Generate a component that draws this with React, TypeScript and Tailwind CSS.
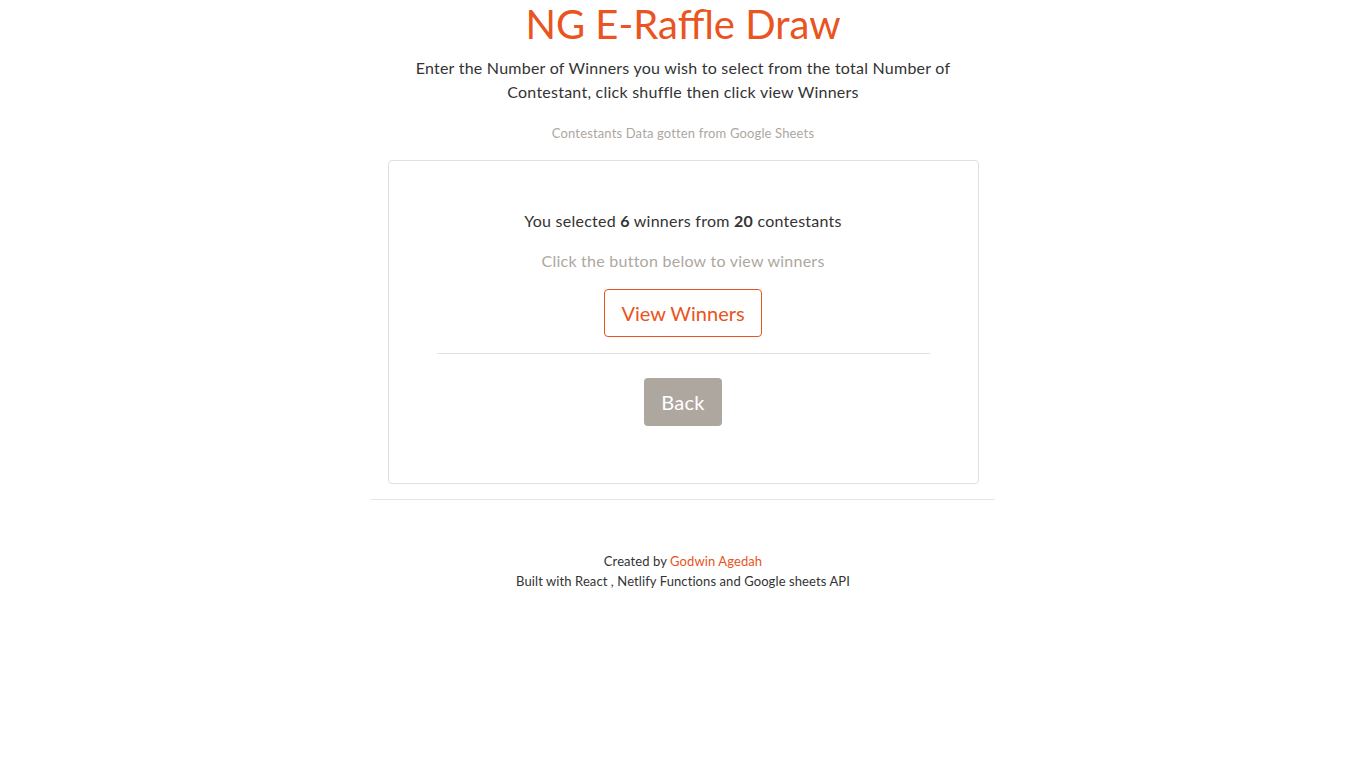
import React from 'react';

const font = { fontFamily: '"Lato", "Noto Sans", sans-serif' };

export default function App() {
  return (
    <div className="min-h-screen w-full bg-white text-[#333333]" style={font}>
      <div className="mx-auto w-[624px] flex flex-col items-center text-center">
        <h1 className="text-[40px] leading-[48px] text-[#e95420] font-normal">NG E-Raffle Draw</h1>
        <p className="mt-2 text-[16px] leading-6 w-[560px] tracking-[0.24px]">
          Enter the Number of Winners you wish to select from the total Number of Contestant, click shuffle then click view Winners
        </p>
        <p className="mt-[21px] text-[13px] leading-4 text-[#aea79f] tracking-[0.15px]">Contestants Data gotten from Google Sheets</p>

        <div className="mt-[19px] w-[591px] h-[324px] border border-[#dfdfdf] rounded-[4px] flex flex-col items-center pt-[48px] px-12 tracking-[0.25px]">
          <p className="text-[16px] leading-6">
            You selected <b>6</b> winners from <b>20</b> contestants
          </p>
          <p className="mt-4 text-[16px] leading-6 text-[#aea79f]">Click the button below to view winners</p>
          <button className="mt-4 w-[158px] h-[48px] border border-[#e95420] rounded-[4px] text-[20px] tracking-normal text-[#e95420] bg-white">
            View Winners
          </button>
          <div className="mt-4 w-full border-t border-[#e2e2e2]" />
          <button className="mt-6 w-[78px] h-[48px] rounded-[4px] bg-[#aea79f] text-white text-[20px]">Back</button>
        </div>

        <div className="mt-[15px] w-full border-t border-[#e5e5e5]" />

        <div className="mt-[51px] text-[13px] leading-5 tracking-[0.09px]">
          <div>
            Created by <span className="text-[#e95420]">Godwin Agedah</span>
          </div>
          <div>Built with React , Netlify Functions and Google sheets API</div>
        </div>
      </div>
    </div>
  );
}
